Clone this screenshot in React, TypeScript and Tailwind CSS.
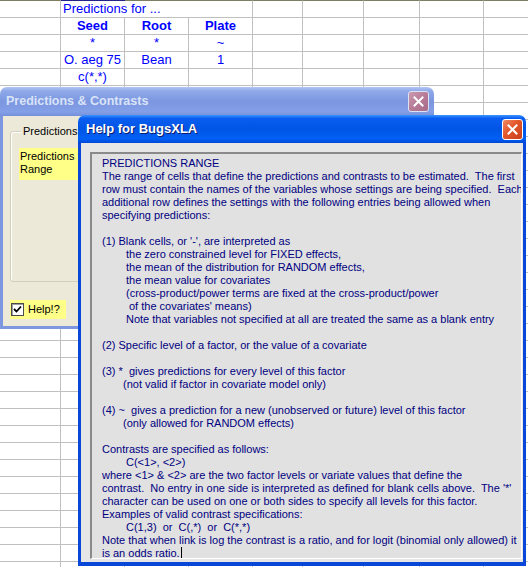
import React from 'react';

const COLS = [61, 64, 64, 64, 50, 61, 56, 64, 64];
const ROWS = 34;

// sheet cell contents keyed by row-col
const CELLS: Record<string, { text: string; bold?: boolean; left?: boolean }> = {
  '0-1': { text: 'Predictions for ...', left: true },
  '1-1': { text: 'Seed', bold: true },
  '1-2': { text: 'Root', bold: true },
  '1-3': { text: 'Plate', bold: true },
  '2-1': { text: '*' },
  '2-2': { text: '*' },
  '2-3': { text: '~' },
  '3-1': { text: 'O. aeg 75' },
  '3-2': { text: 'Bean' },
  '3-3': { text: '1' },
  '4-1': { text: 'c(*,*)' },
};

const HELP: [number, string][] = [
  [0, 'PREDICTIONS RANGE'],
  [0, 'The range of cells that define the predictions and contrasts to be estimated.  The first'],
  [0, 'row must contain the names of the variables whose settings are being specified.  Each'],
  [0, 'additional row defines the settings with the following entries being allowed when'],
  [0, 'specifying predictions:'],
  [0, ''],
  [0, "(1) Blank cells, or '-', are interpreted as"],
  [24, 'the zero constrained level for FIXED effects,'],
  [24, 'the mean of the distribution for RANDOM effects,'],
  [24, 'the mean value for covariates'],
  [24, '(cross-product/power terms are fixed at the cross-product/power'],
  [27, "of the covariates' means)"],
  [24, 'Note that variables not specified at all are treated the same as a blank entry'],
  [0, ''],
  [0, '(2) Specific level of a factor, or the value of a covariate'],
  [0, ''],
  [0, '(3) *  gives predictions for every level of this factor'],
  [21, '(not valid if factor in covariate model only)'],
  [0, ''],
  [0, '(4) ~  gives a prediction for a new (unobserved or future) level of this factor'],
  [21, '(only allowed for RANDOM effects)'],
  [0, ''],
  [0, 'Contrasts are specified as follows:'],
  [24, 'C(<1>, <2>)'],
  [0, 'where <1> & <2> are the two factor levels or variate values that define the'],
  [0, "contrast.  No entry in one side is interpreted as defined for blank cells above.  The '*'"],
  [0, 'character can be used on one or both sides to specify all levels for this factor.'],
  [0, 'Examples of valid contrast specifications:'],
  [24, 'C(1,3)  or  C(,*)  or  C(*,*)'],
  [0, 'Note that when link is log the contrast is a ratio, and for logit (binomial only allowed) it'],
  [0, 'is an odds ratio.'],
];

const CloseX: React.FC<{ active?: boolean }> = ({ active }) => (
  <div
    className={
      active
        ? 'w-[21px] h-[21px] shrink-0 rounded-[3px] border border-white bg-[linear-gradient(135deg,#f08a64_0%,#e2552b_45%,#c8401c_100%)] flex items-center justify-center'
        : 'w-[21px] h-[21px] shrink-0 rounded-[3px] border border-[#dbe2f4] bg-[linear-gradient(135deg,#c99aae_0%,#b77b98_50%,#a86c8a_100%)] flex items-center justify-center'
    }
  >
    <svg width="11" height="11" viewBox="0 0 11 11">
      <path d="M1.5 1.5 L9.5 9.5 M9.5 1.5 L1.5 9.5" stroke="white" strokeWidth="2" strokeLinecap="square" />
    </svg>
  </div>
);

const Sheet: React.FC = () => (
  <div className="flex flex-col">
    {Array.from({ length: ROWS }).map((_, r) => (
      <div key={r} className="flex">
        {COLS.map((w, c) => {
          const cell = CELLS[`${r}-${c}`];
          const first = r === 0;
          // the first row's text spills over cols 1-2, so no line between them
          const noRight = first && (c === 1 || c === 2);
          const top = first ? (c === 1 ? 'border-t border-t-[#22228a]' : 'border-t border-t-[#7e7e62]') : '';
          return (
            <div
              key={c}
              style={{ width: w, minWidth: w }}
              className={`${first ? 'h-[18px]' : 'h-[17px]'} border-b ${
                noRight ? '' : 'border-r'
              } border-[#c0c0c0] ${top} relative flex items-center`}
            >
              {cell && (
                <span
                  className={`text-[13px] leading-[16px] text-[#0000ff] whitespace-nowrap ${
                    cell.bold ? 'font-bold' : ''
                  } ${cell.left ? 'pl-[2px]' : 'w-full text-center'}`}
                >
                  {cell.text}
                </span>
              )}
            </div>
          );
        })}
      </div>
    ))}
  </div>
);

const BackDialog: React.FC = () => (
  <div className="absolute left-0 top-[87px] w-[434px] h-[242px] flex flex-col">
    <div className="h-[29px] shrink-0 rounded-t-[7px] bg-[linear-gradient(to_bottom,#b2c6f4_0%,#8ea8e9_14%,#7c97e0_50%,#839fe6_86%,#7590dc_100%)] flex items-center pl-[6px] pr-[5px]">
      <span className="text-[12.5px] font-bold text-[#d9e3f7] flex-1">Predictions &amp; Contrasts</span>
      <CloseX />
    </div>
    <div className="flex-1 min-h-0 bg-[#ece9d8] border-x-[3px] border-b-[3px] border-[#7c97e0] pt-[15px] pl-[7px] pr-[7px] flex flex-col">
      <div className="relative h-[151px] shrink-0 border border-[#d0d0bf] rounded-[3px] shadow-[inset_1px_1px_0_#ffffff]">
        <span className="absolute -top-[7px] left-[10px] px-[2px] bg-[#ece9d8] text-[11px] leading-[13px] text-black">
          Predictions
        </span>
        <div className="mt-[16px] ml-[8px] w-[80px] h-[32px] bg-[#ffff88] text-[11px] leading-[13px] text-black pt-[2px] pl-[1px]">
          Predictions
          <br />
          Range
        </div>
      </div>
      <div className="mt-[18px] w-[56px] h-[19px] shrink-0 bg-[#ffff88] flex items-center pl-[1px] gap-[4px]">
        <div className="w-[13px] h-[13px] border border-[#4b4b4b] bg-white flex items-center justify-center shadow-[inset_1px_1px_0_#a0a0a0]">
          <svg width="9" height="9" viewBox="0 0 9 9">
            <path d="M1 4 L3.5 6.5 L8 1.5" stroke="#000" strokeWidth="1.8" fill="none" />
          </svg>
        </div>
        <span className="text-[11px] text-black">Help!?</span>
      </div>
    </div>
  </div>
);

const HelpWindow: React.FC = () => (
  <div className="absolute left-[78px] top-[115px] w-[448px] h-[451px] flex flex-col">
    <div className="h-[28px] shrink-0 rounded-t-[7px] bg-[linear-gradient(to_bottom,#3d95ff_0%,#0a5df0_12%,#0055e5_50%,#0060f5_85%,#0047d6_100%)] flex items-center pl-[8px] pr-[3px]">
      <span className="text-[13px] font-bold text-white flex-1 [text-shadow:1px_1px_0_#0a1a6e]">
        Help for BugsXLA
      </span>
      <CloseX active />
    </div>
    <div className="flex-1 min-h-0 bg-[#e6e6e6] border-x-[3px] border-b-[4px] border-[#0847d8] pt-[9px] pl-[9px] pr-[1px] pb-[3px] flex">
      <div className="flex-1 min-h-0 overflow-hidden bg-[#e1e1e1] border-t-2 border-l-2 border-r border-b border-t-[#8a8a8a] border-l-[#8a8a8a] border-r-white border-b-white pt-[3px] pl-[10px]">
        {HELP.map(([indent, text], i) => (
          <div
            key={i}
            style={{ paddingLeft: indent }}
            className="h-[13px] text-[11px] leading-[13px] text-[#000080] whitespace-pre"
          >
            {text}
            {i === HELP.length - 1 && (
              <span className="inline-block w-px h-[13px] bg-black align-top ml-[1px]" />
            )}
          </div>
        ))}
      </div>
    </div>
  </div>
);

export default function App() {
  return (
    <div className="relative w-[528px] h-[567px] overflow-hidden bg-white font-['Liberation_Sans',Arial,sans-serif]">
      <Sheet />
      <BackDialog />
      <HelpWindow />
    </div>
  );
}
